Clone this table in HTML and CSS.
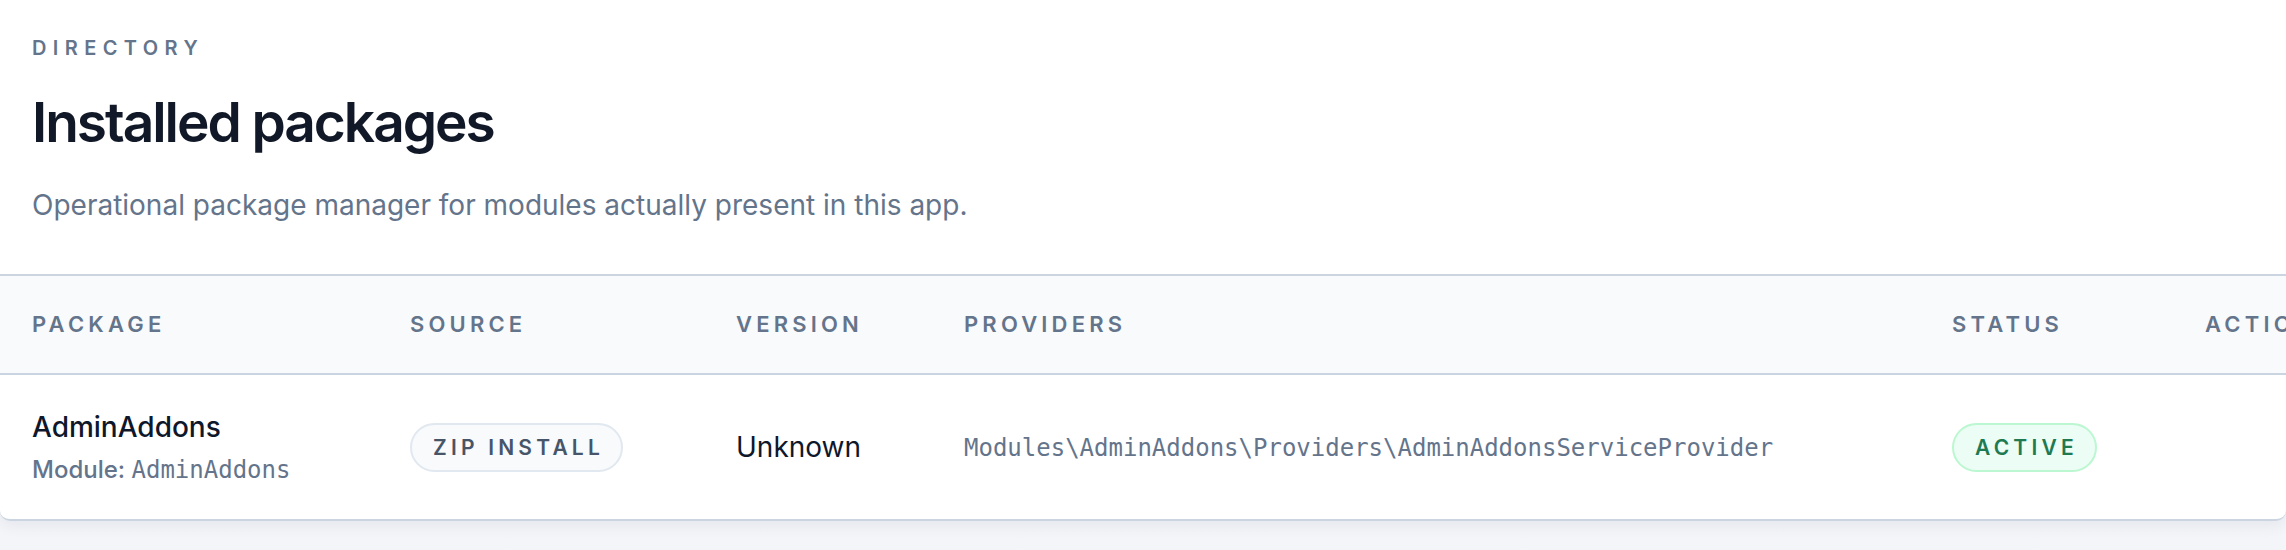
FILE: index.html
```html
<!DOCTYPE html>
<html lang="en">
<head>
<meta charset="utf-8">
<title>Installed packages</title>
<link rel="stylesheet" href="styles.css">
</head>
<body>
<main class="panel">
  <header class="page-head">
    <p class="eyebrow">Directory</p>
    <h1 class="title">Installed packages</h1>
    <p class="subtitle">Operational package manager for modules actually present in this app.</p>
  </header>
  <div class="table-wrap">
    <table class="pkg-table">
      <colgroup>
        <col class="c-package">
        <col class="c-source">
        <col class="c-version">
        <col class="c-providers">
        <col class="c-status">
        <col class="c-actions">
      </colgroup>
      <thead>
        <tr>
          <th>Package</th>
          <th>Source</th>
          <th>Version</th>
          <th>Providers</th>
          <th>Status</th>
          <th>Actions</th>
        </tr>
      </thead>
      <tbody>
        <tr>
          <td>
            <div class="pkg-name">AdminAddons</div>
            <div class="pkg-meta">Module: <code class="mono">AdminAddons</code></div>
          </td>
          <td><span class="badge badge-source">Zip install</span></td>
          <td class="version">Unknown</td>
          <td><code class="provider">Modules\AdminAddons\Providers\AdminAddonsServiceProvider</code></td>
          <td><span class="badge badge-active">Active</span></td>
          <td></td>
        </tr>
      </tbody>
    </table>
  </div>
</main>
</body>
</html>
```

FILE: styles.css
```css
* { box-sizing: border-box; }

html, body {
  margin: 0;
  padding: 0;
}

body {
  font-family: Inter, "Noto Sans", "Liberation Sans", sans-serif;
  color: #0f172a;
  background: linear-gradient(180deg, #eef0f6 0%, #f4f5f9 100%);
  min-height: 550px;
  overflow: hidden;
}

.panel {
  background: #ffffff;
  border-bottom: 2px solid #cbd5e1;
  border-radius: 0 0 10px 10px;
  box-shadow: 0 6px 14px rgba(15, 23, 42, 0.05);
  overflow: hidden;
}

.page-head {
  padding: 33px 32px 49px;
}

.eyebrow {
  margin: 0;
  font-size: 20px;
  line-height: 30px;
  font-weight: 600;
  letter-spacing: 0.32em;
  text-transform: uppercase;
  color: #64748b;
}

.title {
  margin: 29px 0 0;
  font-size: 55px;
  line-height: 60px;
  font-weight: 600;
  letter-spacing: -0.037em;
  color: #111827;
}

.subtitle {
  margin: 33px 0 0;
  font-size: 28px;
  line-height: 40px;
  color: #64748b;
}

.table-wrap {
  border-top: 2px solid #cbd5e1;
}

.pkg-table {
  width: 2473px;
  table-layout: fixed;
  border-collapse: collapse;
}

.c-package { width: 378px; }
.c-source { width: 326px; }
.c-version { width: 228px; }
.c-providers { width: 988px; }
.c-status { width: 253px; }
.c-actions { width: 300px; }

.pkg-table th {
  background: #f8fafc;
  border-bottom: 2px solid #cbd5e1;
  padding: 32px 0 32px 32px;
  text-align: left;
  font-size: 22px;
  line-height: 33px;
  font-weight: 600;
  letter-spacing: 0.19em;
  text-transform: uppercase;
  color: #64748b;
  white-space: nowrap;
}

.pkg-table td {
  padding: 33px 0 32px 32px;
  vertical-align: middle;
  white-space: nowrap;
}

.pkg-name {
  font-size: 28px;
  line-height: 39px;
  font-weight: 500;
  color: #0f172a;
}

.pkg-meta {
  margin-top: 6px;
  font-size: 24px;
  line-height: 33px;
  font-weight: 500;
  color: #64748b;
}

.mono {
  font-family: "DejaVu Sans Mono", "Liberation Mono", monospace;
  font-size: 24px;
  font-weight: 400;
}

.version {
  font-size: 28px;
  line-height: 39px;
  color: #0f172a;
}

.provider {
  font-family: "DejaVu Sans Mono", "Liberation Mono", monospace;
  font-size: 24px;
  line-height: 36px;
  color: #64748b;
}

.badge {
  display: inline-block;
  border: 2px solid;
  border-radius: 999px;
  padding: 10px 17px 10px 21px;
  font-size: 21px;
  line-height: 25px;
  font-weight: 600;
  letter-spacing: 0.2em;
  text-transform: uppercase;
}

.badge-source {
  background: #f8fafc;
  border-color: #e2e8f0;
  color: #475569;
}

.badge-active {
  background: #ecfdf5;
  border-color: #bbf7d0;
  color: #1f7a52;
}
```
